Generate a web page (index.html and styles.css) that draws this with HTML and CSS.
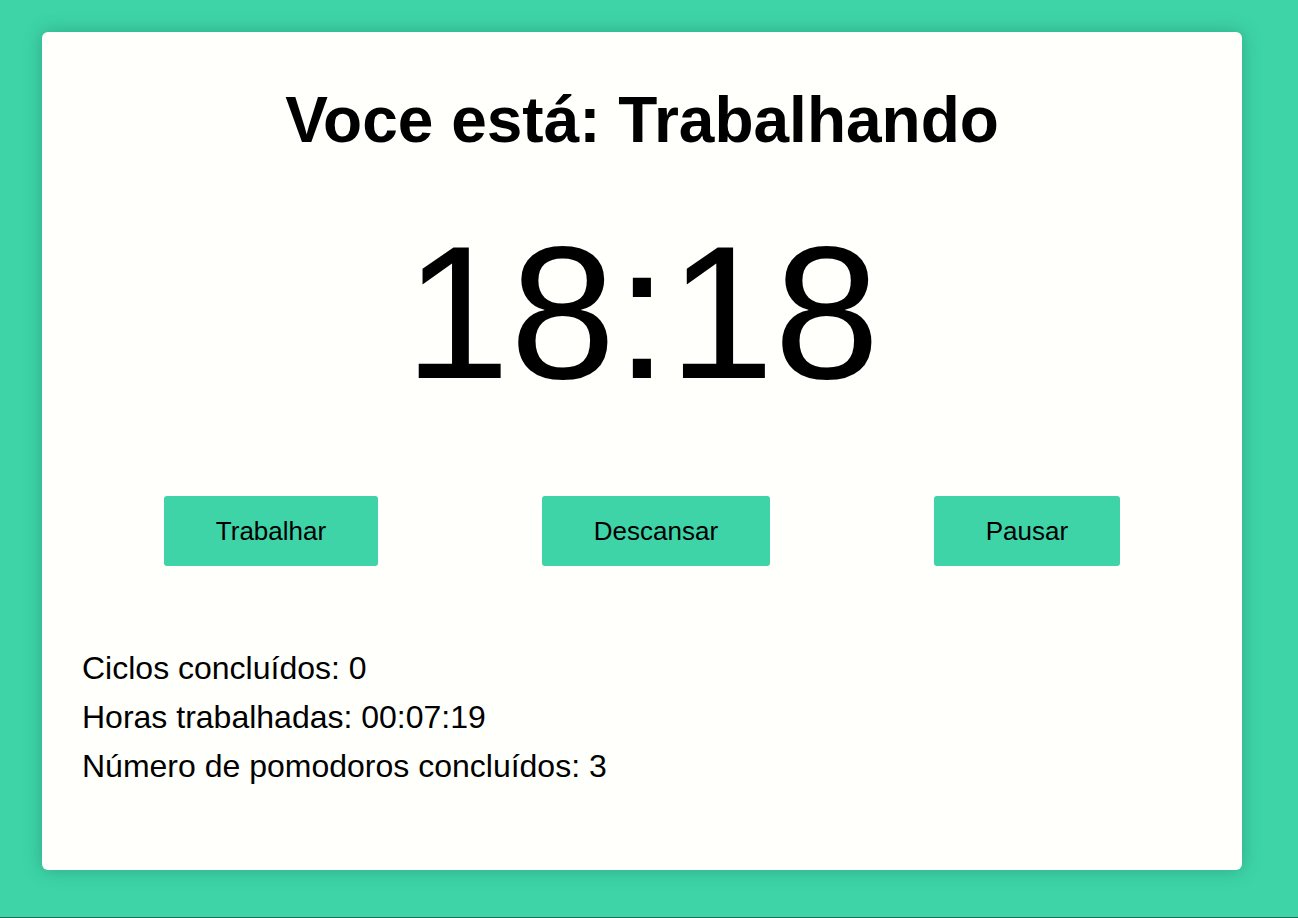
FILE: index.html
```html
<!DOCTYPE html>
<html lang="pt-BR">
<head>
<meta charset="utf-8">
<title>Pomodoro</title>
<link rel="stylesheet" href="styles.css">
</head>
<body>
<div class="page">
  <main class="card">
    <h1 class="title">Voce está: Trabalhando</h1>
    <div class="timer">18:18</div>
    <div class="actions">
      <button class="btn">Trabalhar</button>
      <button class="btn">Descansar</button>
      <button class="btn">Pausar</button>
    </div>
    <div class="stats">
      <p class="stat">Ciclos concluídos: 0</p>
      <p class="stat">Horas trabalhadas: 00:07:19</p>
      <p class="stat">Número de pomodoros concluídos: 3</p>
    </div>
  </main>
</div>
</body>
</html>
```
FILE: styles.css
```css
html, body {
  margin: 0;
  padding: 0;
}
body {
  box-sizing: border-box;
  min-height: 100vh;
  background: #3ed4a8;
  border-bottom: 1px solid #1d6f58;
  font-family: "Liberation Sans", Arial, Helvetica, sans-serif;
  color: #000;
}
.page {
  padding: 32px 0 0 42px;
}
.card {
  box-sizing: border-box;
  width: 1200px;
  height: 838px;
  background: #fffffc;
  border-radius: 6px;
  padding: 40px;
  box-shadow: 0 0 18px rgba(20, 90, 70, 0.35);
  display: flex;
  flex-direction: column;
}
.title {
  margin: 11px 0 0;
  font-size: 64px;
  font-weight: 700;
  line-height: 74px;
  text-align: center;
}
.timer {
  margin-top: 60px;
  font-size: 190px;
  line-height: 190px;
  text-align: center;
}
.actions {
  margin-top: 89px;
  display: flex;
  justify-content: space-around;
}
.btn {
  height: 70px;
  padding: 0 52px;
  border: none;
  border-radius: 3px;
  background: #3ed4a8;
  color: #000;
  font-family: "Liberation Sans", Arial, Helvetica, sans-serif;
  font-size: 26px;
}
.stats {
  margin-top: 78px;
}
.stat {
  margin: 0;
  font-size: 32px;
  line-height: 49px;
}
```
